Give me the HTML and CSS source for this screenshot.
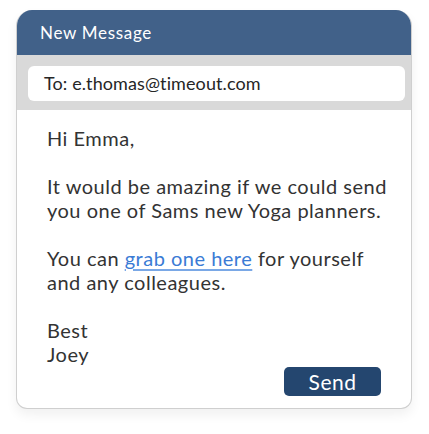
FILE: index.html
```html
<!DOCTYPE html>
<html lang="en">
<head>
  <meta charset="UTF-8">
  <title>New Message</title>
  <link rel="stylesheet" href="styles.css">
</head>
<body>

<div class="message">
  <div class="message-header">New Message</div>
  <div class="message-to">
    <div class="to-field">To: e.thomas@timeout.com</div>
  </div>
  <div class="message-body">
    <p>Hi Emma,</p>
    <p>It would be amazing if we could send you one of Sams new Yoga planners.</p>
    <p>You can <a href="#">grab one here</a> for yourself and any colleagues.</p>
    <p>Best<br>Joey</p>
    <div class="actions">
      <button class="send">Send</button>
    </div>
  </div>
</div>

</body>
</html>
```

FILE: styles.css
```css
body {
  margin: 0;
  padding: 10px 17px 25px 16px;
  background-color: #ffffff;
  font-family: Lato, "Open Sans", sans-serif;
}

.message {
  background-color: white;
  border: 1px solid #cfcfcf;
  border-top: none;
  border-radius: 16px 16px 11px 11px;
  box-shadow: 0 6px 12px rgba(0,0,0,0.06);
  overflow: hidden;
}

.message-header {
  background-color: #416189;
  color: white;
  font-size: 17px;
  letter-spacing: 0.7px;
  height: 45px;
  line-height: 45px;
  padding-left: 23px;
}

.message-to {
  background-color: #d9d9d9;
  padding: 11px 6px 9px 11px;
}

.to-field {
  background-color: white;
  border-radius: 6px;
  height: 35px;
  line-height: 35px;
  padding-left: 16px;
  font-size: 18px;
  color: #262626;
  letter-spacing: 0.1px;
}

.message-body {
  padding: 16px 20px 12px 30px;
  color: #333333;
  font-size: 20px;
  line-height: 24px;
  letter-spacing: 0.5px;
}

.message-body p {
  margin: 0 0 24px 0;
}

.message-body p:last-of-type {
  margin-bottom: 0;
}

.message-body a {
  color: #3a7bd5;
  text-decoration: underline;
  text-decoration-color: #7aa8e6;
  text-underline-offset: 3px;
}

.actions {
  display: flex;
  justify-content: flex-end;
  margin-top: 1px;
  padding-right: 10px;
}

.send {
  background-color: #24466f;
  color: white;
  border: none;
  border-radius: 5px;
  width: 97px;
  height: 29px;
  font-family: Lato, sans-serif;
  font-size: 21px;
  letter-spacing: 0.5px;
  padding: 0;
}
```
